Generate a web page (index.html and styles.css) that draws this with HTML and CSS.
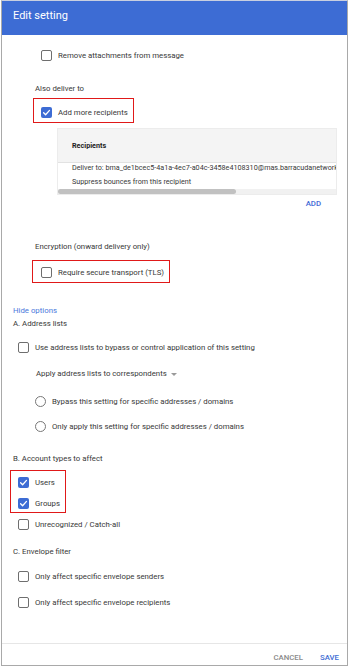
FILE: index.html
```html
<!DOCTYPE html>
<html>
<head>
<meta charset="utf-8">
<link rel="stylesheet" href="styles.css">
</head>
<body>
<div class="dialog">
  <div class="header">Edit setting</div>
  <div class="content">
    <div class="row ind-cb m15"><span class="cb"></span><span>Remove attachments from message</span></div>
    <div class="label ind-label m22">Also deliver to</div>
    <div class="hl hl-1 m3">
      <div class="row"><span class="cb checked"><svg viewBox="0 0 11 11" width="11" height="11"><polyline points="2.6,5.7 4.6,7.7 8.5,3.4" fill="none" stroke="#fff" stroke-width="1.3" stroke-linecap="round" stroke-linejoin="round"/></svg></span><span>Add more recipients</span></div>
    </div>
    <div class="table m5">
      <div class="thead">Recipients</div>
      <div class="trow">Deliver to: bma_de1bcec5-4a1a-4ec7-a04c-3458e4108310@mas.barracudanetworks.com</div>
      <div class="trow r2">Suppress bounces from this recipient</div>
      <div class="hscroll"><div class="thumb"></div></div>
    </div>
    <div class="add-wrap m3"><span class="add">ADD</span></div>
    <div class="label ind-label m31">Encryption (onward delivery only)</div>
    <div class="hl hl-2 m7">
      <div class="row"><span class="cb"></span><span>Require secure transport (TLS)</span></div>
    </div>
    <div class="label link m22">Hide options</div>
    <div class="label m1">A. Address lists</div>
    <div class="row ind-sub m12"><span class="cb"></span><span>Use address lists to bypass or control application of this setting</span></div>
    <div class="label ind-apply m15">Apply address lists to correspondents<span class="caret"></span></div>
    <div class="row ind-radio m16"><span class="radio"></span><span>Bypass this setting for specific addresses / domains</span></div>
    <div class="row ind-radio m14"><span class="radio"></span><span>Only apply this setting for specific addresses / domains</span></div>
    <div class="label m21">B. Account types to affect</div>
    <div class="hl hl-3 m5">
      <div class="row"><span class="cb checked"><svg viewBox="0 0 11 11" width="11" height="11"><polyline points="2.6,5.7 4.6,7.7 8.5,3.4" fill="none" stroke="#fff" stroke-width="1.3" stroke-linecap="round" stroke-linejoin="round"/></svg></span><span>Users</span></div>
      <div class="row gap10"><span class="cb checked"><svg viewBox="0 0 11 11" width="11" height="11"><polyline points="2.6,5.7 4.6,7.7 8.5,3.4" fill="none" stroke="#fff" stroke-width="1.3" stroke-linecap="round" stroke-linejoin="round"/></svg></span><span>Groups</span></div>
    </div>
    <div class="row ind-sub m6"><span class="cb"></span><span>Unrecognized / Catch-all</span></div>
    <div class="label m16">C. Envelope filter</div>
    <div class="row ind-sub m13"><span class="cb"></span><span>Only affect specific envelope senders</span></div>
    <div class="row ind-sub m15"><span class="cb"></span><span>Only affect specific envelope recipients</span></div>
  </div>
  <div class="footer">
    <span class="btn cancel">CANCEL</span>
    <span class="btn save">SAVE</span>
  </div>
</div>
</body>
</html>
```

FILE: styles.css
```css
* { box-sizing: border-box; }
html, body { margin: 0; padding: 0; background: #fff; }
body {
  font-family: Roboto, "Liberation Sans", Arial, sans-serif;
  font-size: 7.8px;
  color: #383838;
}
.dialog {
  margin-left: 1px;
  width: 347px;
  height: 666px;
  border: 1px solid #a9a9a9;
  border-top-color: #c9cfe0;
  display: flex;
  flex-direction: column;
  overflow: hidden;
}
.header {
  height: 34px;
  flex: none;
  background: #3d6cd4;
  color: #fff;
  font-size: 11px;
  line-height: 14px;
  padding: 8px 0 0 11px;
}
.content {
  flex: 1;
  padding-left: 11px;
  display: flex;
  flex-direction: column;
  align-items: flex-start;
}
.row {
  display: flex;
  align-items: center;
  height: 11px;
  line-height: 11px;
  gap: 6px;
  white-space: nowrap;
}
.label {
  height: 12px;
  line-height: 12px;
  white-space: nowrap;
  display: flex;
  align-items: center;
}
.link { color: #4a78dc; }
.cb {
  width: 11px;
  height: 11px;
  flex: none;
  border: 1.5px solid #6e6e6e;
  border-radius: 2px;
  display: block;
}
.cb.checked {
  background: #3d6cd4;
  border: none;
}
.cb svg { display: block; }
.radio {
  width: 11px;
  height: 11px;
  flex: none;
  border: 1px solid #777;
  border-radius: 50%;
}
.caret {
  width: 0;
  height: 0;
  margin-left: 4px;
  border-left: 3px solid transparent;
  border-right: 3px solid transparent;
  border-top: 3.5px solid #9a9a9a;
}
.ind-cb { margin-left: 28px; }
.ind-label { margin-left: 22px; }
.ind-sub { margin-left: 5px; }
.ind-apply { margin-left: 23px; }
.ind-radio { margin-left: 22px; }

.hl { border: 1px solid #e01919; }
.hl-1 { margin-left: 20px; width: 101px; padding: 8px 0 4px 7px; }
.hl-2 { margin-left: 19px; width: 138px; padding: 6px 0 4px 8px; }
.hl-3 { margin-left: -3px; width: 56px; padding: 6px 0 3px 7px; }
.gap10 { margin-top: 10px; }

.table {
  margin-left: 44px;
  width: 280px;
  border: 1px solid #ececec;
  overflow: hidden;
  white-space: nowrap;
  font-size: 7.2px;
}
.thead {
  height: 34px;
  line-height: 33px;
  background: #f4f4f4;
  border-bottom: 1px solid #e2e2e2;
  font-weight: bold;
  color: #222;
  padding-left: 14px;
}
.trow {
  height: 10px;
  line-height: 10px;
  padding-left: 14px;
}
.trow.r2 { margin-top: 4px; }
.hscroll {
  margin-top: 2px;
  height: 5px;
  background: #f1f1f1;
}
.thumb {
  width: 178px;
  height: 5px;
  background: #c1c1c1;
  border-radius: 3px;
}
.add-wrap {
  margin-left: 44px;
  width: 280px;
  height: 12px;
  line-height: 12px;
  text-align: right;
  padding-right: 16px;
}
.add { color: #4169d6; font-weight: 500; }

.footer {
  flex: none;
  height: 22px;
  border-top: 1px solid #e6e6e6;
  padding: 8px 8px 0 0;
  display: flex;
  justify-content: flex-end;
  gap: 17px;
  line-height: 12px;
}
.btn { font-weight: 500; }
.cancel { color: #8a8a8a; }
.save { color: #3d6cd4; }

.m1 { margin-top: 1px; }
.m3 { margin-top: 3px; }
.m5 { margin-top: 5px; }
.m6 { margin-top: 6px; }
.m7 { margin-top: 7px; }
.m12 { margin-top: 12px; }
.m13 { margin-top: 13px; }
.m14 { margin-top: 14px; }
.m15 { margin-top: 15px; }
.m16 { margin-top: 16px; }
.m21 { margin-top: 21px; }
.m22 { margin-top: 22px; }
.m31 { margin-top: 31px; }
```
